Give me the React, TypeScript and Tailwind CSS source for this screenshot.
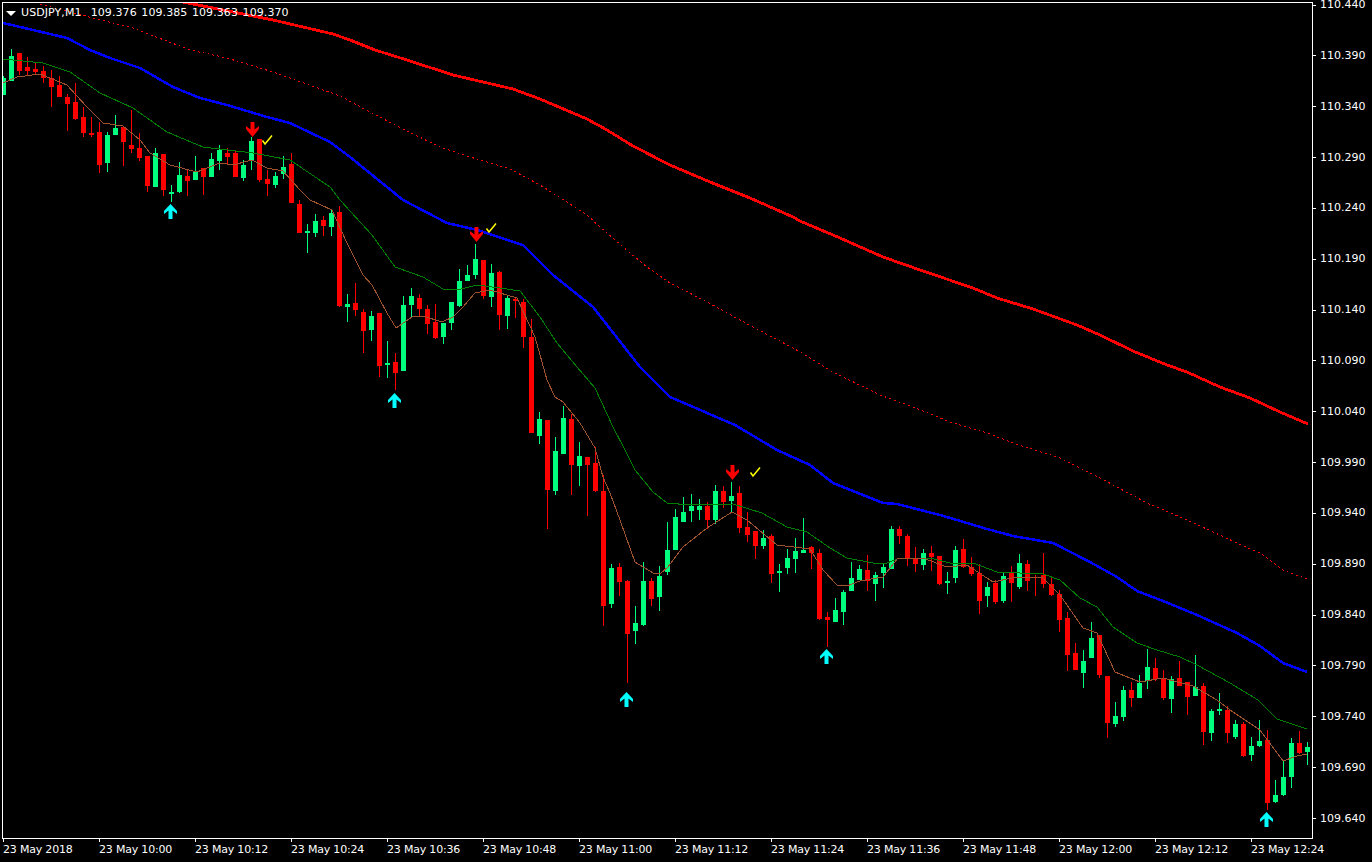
import { Fragment } from "react";

// top, bottom, wick top, wick bottom, bull (1) or bear (0), in page pixels
const candles: [number, number, number, number, number][] = [
	[78, 95, 76, 95, 1], [56, 81, 49, 81, 1], [53, 71, 53, 75, 0], [67, 71, 57, 75, 0],
	[69, 72, 63, 75, 0], [71, 78, 66, 83, 0], [78, 87, 70, 107, 0], [85, 97, 76, 97, 0],
	[97, 104, 94, 131, 0], [102, 119, 83, 120, 0], [117, 133, 107, 137, 0], [133, 135, 117, 137, 0],
	[132, 165, 122, 173, 0], [135, 163, 132, 172, 1], [128, 135, 115, 135, 1], [127, 142, 127, 166, 0],
	[145, 149, 110, 153, 0], [148, 158, 133, 161, 0], [156, 186, 156, 192, 0], [153, 187, 148, 187, 1],
	[154, 190, 154, 196, 0], [192, 194, 185, 202, 1], [175, 192, 162, 193, 1], [176, 181, 170, 196, 0],
	[172, 180, 156, 180, 1], [168, 177, 168, 195, 0], [159, 177, 153, 177, 1], [150, 161, 145, 170, 1],
	[153, 157, 148, 165, 0], [153, 177, 150, 177, 0], [165, 178, 160, 181, 1], [141, 161, 137, 170, 1],
	[139, 180, 139, 182, 0], [179, 184, 170, 196, 0], [176, 185, 172, 188, 1], [167, 174, 156, 179, 1],
	[164, 203, 153, 203, 0], [204, 233, 200, 233, 0], [231, 233, 224, 253, 1], [221, 233, 214, 237, 1],
	[220, 226, 216, 236, 0], [213, 227, 209, 236, 1], [212, 306, 206, 307, 0], [304, 307, 294, 322, 1],
	[303, 310, 283, 316, 0], [312, 331, 309, 353, 0], [316, 330, 311, 341, 1], [313, 366, 313, 377, 0],
	[363, 365, 341, 378, 1], [362, 373, 353, 390, 0], [305, 371, 296, 371, 1], [296, 305, 288, 317, 1],
	[298, 309, 294, 317, 0], [309, 324, 305, 334, 0], [322, 338, 304, 339, 0], [323, 337, 323, 344, 1],
	[302, 323, 302, 330, 1], [281, 306, 269, 307, 1], [275, 281, 265, 281, 1], [259, 275, 244, 279, 1],
	[260, 296, 260, 299, 0], [273, 297, 264, 307, 1], [272, 315, 271, 330, 0], [298, 316, 296, 329, 1],
	[299, 301, 297, 318, 0], [302, 337, 299, 348, 0], [337, 433, 319, 433, 0], [419, 436, 412, 444, 1],
	[420, 490, 420, 529, 0], [451, 491, 437, 495, 1], [418, 454, 406, 454, 1], [419, 465, 414, 495, 0],
	[456, 466, 442, 486, 1], [457, 465, 457, 516, 0], [463, 491, 447, 492, 0], [491, 606, 475, 626, 0],
	[568, 604, 564, 608, 1], [567, 582, 563, 596, 0], [581, 634, 580, 683, 0], [623, 631, 606, 644, 1],
	[581, 625, 562, 626, 1], [581, 599, 578, 606, 0], [576, 597, 566, 611, 1], [550, 572, 522, 575, 1],
	[517, 550, 509, 550, 1], [512, 522, 497, 522, 1], [506, 511, 494, 522, 1], [506, 510, 499, 520, 1],
	[506, 520, 502, 529, 0], [491, 520, 485, 524, 1], [491, 502, 486, 508, 0], [496, 501, 482, 512, 1],
	[493, 528, 486, 533, 0], [527, 535, 512, 542, 0], [531, 546, 531, 559, 0], [538, 546, 530, 549, 1],
	[536, 574, 534, 583, 0], [571, 573, 564, 592, 1], [558, 568, 549, 574, 1], [551, 559, 538, 573, 1],
	[550, 553, 518, 553, 1], [547, 553, 546, 569, 0], [553, 619, 549, 620, 0], [617, 620, 612, 647, 0],
	[610, 622, 598, 622, 1], [592, 612, 590, 625, 1], [578, 591, 562, 591, 1], [569, 580, 565, 580, 1],
	[570, 581, 555, 591, 0], [575, 584, 572, 601, 1], [567, 573, 564, 588, 1], [529, 569, 526, 569, 1],
	[529, 536, 526, 544, 0], [536, 558, 534, 566, 0], [559, 564, 547, 572, 0], [553, 565, 549, 570, 1],
	[553, 557, 546, 571, 0], [556, 584, 556, 585, 0], [581, 583, 572, 594, 1], [550, 578, 546, 583, 1],
	[549, 567, 539, 568, 0], [567, 574, 557, 576, 0], [573, 601, 564, 614, 0], [587, 596, 582, 607, 1],
	[583, 602, 580, 604, 0], [576, 601, 573, 603, 1], [573, 583, 566, 602, 0], [563, 587, 554, 589, 1],
	[564, 581, 560, 591, 0], [577, 578, 575, 596, 0], [575, 584, 553, 588, 0], [584, 595, 578, 596, 0],
	[594, 620, 590, 632, 0], [618, 655, 612, 671, 0], [653, 670, 643, 670, 0], [661, 673, 650, 688, 1],
	[638, 658, 622, 658, 1], [635, 675, 635, 678, 0], [676, 723, 676, 738, 0], [716, 724, 702, 727, 1],
	[690, 717, 686, 721, 1], [690, 698, 682, 707, 0], [683, 698, 675, 698, 1], [667, 681, 649, 689, 1],
	[668, 679, 658, 681, 0], [678, 698, 670, 700, 0], [679, 699, 676, 713, 1], [678, 686, 661, 686, 0],
	[682, 697, 682, 715, 0], [687, 696, 655, 696, 1], [686, 732, 683, 745, 0], [711, 733, 709, 741, 1],
	[709, 711, 693, 715, 1], [710, 733, 706, 743, 0], [724, 737, 720, 739, 1], [724, 756, 722, 757, 0],
	[746, 755, 737, 761, 1], [741, 746, 720, 747, 1], [740, 803, 730, 810, 0], [795, 802, 780, 803, 1],
	[777, 795, 761, 796, 1], [743, 777, 738, 788, 1], [743, 753, 731, 754, 0], [747, 752, 742, 765, 1],
];

const redLine =
	"183,2 233,12 273,20 333,34 350,40 375,50 407,60 453,75 513,89 540,99 587,119 607,130 633,146 670,165 710,182 750,198 793,217 800,221 840,238 883,257 923,271 973,288 997,298 1033,309 1077,325 1100,335 1133,351 1167,365 1187,372 1220,387 1250,398 1280,412 1308,424";
const dottedLine =
	"40,4 93,18 133,28 190,50 227,58 273,72 340,96 370,112 407,131 440,147 470,157 487,162 510,169 540,185 567,202 587,215 600,227 623,247 647,267 670,283 707,302 753,327 793,348 800,352 833,372 880,395 913,407 950,422 987,433 1013,443 1060,458 1100,478 1147,503 1187,520 1237,543 1260,553 1283,570 1307,579";
const blueLine =
	"3,23 33,30 67,38 90,50 110,58 140,68 173,87 200,98 227,105 267,117 290,123 330,142 350,157 403,200 447,223 477,230 523,245 553,275 593,307 640,367 670,397 735,425 777,450 810,465 833,483 883,503 897,504 940,515 957,520 987,529 1013,536 1053,543 1090,562 1117,577 1137,591 1163,601 1197,615 1237,633 1260,646 1283,663 1307,672";
const greenLine =
	"3,59 43,63 70,72 100,93 133,108 167,132 203,147 253,153 290,160 330,187 340,200 372,235 395,267 423,277 443,289 457,290 477,285 500,288 520,291 540,317 557,343 577,367 595,388 613,427 625,450 635,470 653,492 667,503 690,505 733,504 762,513 787,527 807,532 830,548 847,558 873,563 887,563 900,558 930,558 950,563 973,563 997,572 1043,574 1060,580 1080,598 1097,607 1113,627 1137,643 1157,650 1180,657 1197,665 1230,683 1258,700 1277,719 1307,729";
const brownLine =
	"3,83 17,77 40,74 67,85 87,107 103,123 123,126 140,140 150,153 170,165 197,172 220,163 233,165 252,160 267,168 283,171 300,190 310,200 332,210 347,243 363,275 372,285 387,313 396,328 412,317 423,316 442,322 453,317 463,307 475,293 490,290 517,298 535,337 547,380 555,397 563,402 580,423 595,448 603,477 610,493 620,520 635,562 653,573 660,574 668,567 683,547 707,528 732,512 747,520 777,545 810,549 823,570 837,585 847,586 860,581 883,577 898,558 923,558 947,567 967,565 993,582 1017,577 1043,578 1060,595 1083,628 1097,633 1115,672 1140,682 1163,678 1193,686 1217,700 1230,710 1260,730 1283,761 1297,756 1307,754";

const upArrows = [
	[170, 204],
	[394, 393],
	[626, 692],
	[826, 649],
	[1266, 812],
];
const downArrows = [
	[252, 122],
	[476, 227],
	[732, 465],
];
const checks = [
	[262, 135],
	[486, 223],
	[750, 467],
];

const prices = [
	"110.440", "110.390", "110.340", "110.290", "110.240", "110.190", "110.140", "110.090", "110.040",
	"109.990", "109.940", "109.890", "109.840", "109.790", "109.740", "109.690", "109.640",
];
const times = [
	"23 May 2018", "23 May 10:00", "23 May 10:12", "23 May 10:24", "23 May 10:36", "23 May 10:48", "23 May 11:00",
	"23 May 11:12", "23 May 11:24", "23 May 11:36", "23 May 11:48", "23 May 12:00", "23 May 12:12", "23 May 12:24",
];

function Chart() {
	return (
		<svg width={1309} height={835} viewBox="3 3 1309 835" className="block">
			{candles.map(([top, bottom, wickTop, wickBottom, bull], i) => {
				const x = 3 + i * 8;
				const color = bull ? "#00ff7f" : "#ff0000";
				return (
					<Fragment key={x}>
						<rect x={x} y={wickTop} width={1} height={wickBottom - wickTop} fill={color} />
						<rect x={x - 2} y={top} width={5} height={bottom - top} fill={color} />
					</Fragment>
				);
			})}
			<g fill="none" shapeRendering="crispEdges">
				<polyline points={greenLine} stroke="#008000" strokeWidth={1} />
				<polyline points={brownLine} stroke="#a0522d" strokeWidth={1} />
				<polyline points={dottedLine} stroke="#ff0000" strokeWidth={1} strokeDasharray="2 3" />
				<polyline points={blueLine} stroke="#0000ff" strokeWidth={2.5} />
				<polyline points={redLine} stroke="#ff0000" strokeWidth={2.8} />
			</g>
			{upArrows.map(([x, y]) => (
				<polygon
					key={x}
					transform={`translate(${x} ${y})`}
					fill="#00ffff"
					points="0.5,0 7,7 7,10 2.5,6.5 2.5,15 -1.5,15 -1.5,6.5 -6,10 -6,7"
				/>
			))}
			{downArrows.map(([x, y]) => (
				<polygon
					key={x}
					transform={`translate(${x} ${y})`}
					fill="#ff0000"
					points="-1.5,0 2.5,0 2.5,7.5 7,4 7,7 0.5,15 -6,7 -6,4 -1.5,7.5"
				/>
			))}
			{checks.map(([x, y]) => (
				<polyline
					key={x}
					transform={`translate(${x} ${y})`}
					fill="none"
					stroke="#ffff00"
					strokeWidth={1.5}
					points="0.5,5.5 3,9 10,0.5"
				/>
			))}
		</svg>
	);
}

function PriceAxis() {
	return (
		<div className="-mt-[4px] flex flex-col gap-[36.85px]">
			{prices.map((price) => (
				<div key={price} className="flex h-[14px] items-center">
					<div className="h-px w-[3px] bg-white" />
					<span className="ml-[4px] leading-[14px]">{price}</span>
				</div>
			))}
		</div>
	);
}

function TimeAxis() {
	return (
		<div className="ml-px flex">
			{times.map((time) => (
				<div key={time} className="w-[96px] shrink-0">
					<div className="h-[3px] w-px bg-white" />
					<div className="mt-px whitespace-nowrap leading-[14px] tracking-[-0.2px]">{time}</div>
				</div>
			))}
		</div>
	);
}

export default function App() {
	return (
		<div className="flex h-[862px] w-[1372px] flex-col overflow-hidden bg-black pl-[2px] pt-[2px] font-['DejaVu_Sans',sans-serif] text-[11px] text-white">
			<div className="flex">
				<div className="relative h-[837px] w-[1311px] shrink-0 border border-white">
					<Chart />
					<div className="absolute left-[3px] top-[3px] flex items-center gap-[5px]">
						<div className="h-0 w-0 border-x-[5px] border-t-[5px] border-x-transparent border-t-white" />
						<span className="whitespace-pre leading-[14px] tracking-[0.08px] [word-spacing:1px]">
							USDJPY,M1 &nbsp;109.376 109.385 109.363 109.370
						</span>
					</div>
				</div>
				<PriceAxis />
			</div>
			<TimeAxis />
		</div>
	);
}
